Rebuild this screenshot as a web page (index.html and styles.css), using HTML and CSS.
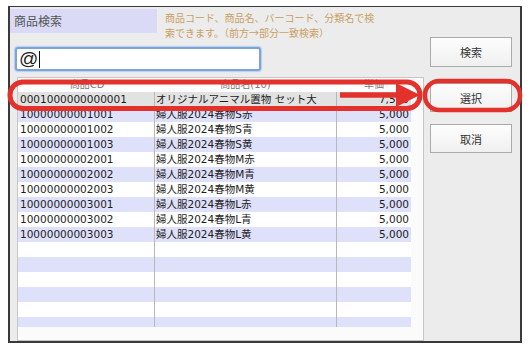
FILE: index.html
```html
<!DOCTYPE html>
<html lang="ja">
<head>
<meta charset="utf-8">
<link rel="stylesheet" href="styles.css">
</head>
<body>
<div class="window">
  <div class="left">
    <div class="top">
      <div class="title">商品検索</div>
      <div class="desc">商品コード、商品名、バーコード、分類名で検<br>索できます。（前方→部分一致検索）</div>
    </div>
    <div class="search"><span class="at">@</span><span class="caret"></span></div>
    <div class="table">
      <div class="grid">
        <div class="row head"><div>商品CD</div><div>商品名(10)</div><div>単価</div></div>
        <div class="body">
          <div class="row sel"><div>0001000000000001</div><div>オリジナルアニマル置物 セット大</div><div class="num">7,500</div></div>
          <div class="row odd"><div>10000000001001</div><div>婦人服2024春物S赤</div><div class="num">5,000</div></div>
          <div class="row"><div>10000000001002</div><div>婦人服2024春物S青</div><div class="num">5,000</div></div>
          <div class="row odd"><div>10000000001003</div><div>婦人服2024春物S黄</div><div class="num">5,000</div></div>
          <div class="row"><div>10000000002001</div><div>婦人服2024春物M赤</div><div class="num">5,000</div></div>
          <div class="row odd"><div>10000000002002</div><div>婦人服2024春物M青</div><div class="num">5,000</div></div>
          <div class="row"><div>10000000002003</div><div>婦人服2024春物M黄</div><div class="num">5,000</div></div>
          <div class="row odd"><div>10000000003001</div><div>婦人服2024春物L赤</div><div class="num">5,000</div></div>
          <div class="row"><div>10000000003002</div><div>婦人服2024春物L青</div><div class="num">5,000</div></div>
          <div class="row odd"><div>10000000003003</div><div>婦人服2024春物L黄</div><div class="num">5,000</div></div>
          <div class="row"><div></div><div></div><div></div></div>
          <div class="row odd"><div></div><div></div><div></div></div>
          <div class="row"><div></div><div></div><div></div></div>
          <div class="row odd"><div></div><div></div><div></div></div>
          <div class="row"><div></div><div></div><div></div></div>
          <div class="row odd"><div></div><div></div><div></div></div>
        </div>
      </div>
    </div>
  </div>
  <div class="right">
    <button class="btn b1">検索</button>
    <button class="btn b2">選択</button>
    <button class="btn b3">取消</button>
  </div>
</div>
<svg class="annot" width="530" height="354" viewBox="0 0 530 354">
  <rect x="10" y="82" width="410" height="26.5" rx="13" ry="13" fill="none" stroke="#e3322b" stroke-width="5"/>
  <line x1="340" y1="95" x2="400" y2="95" stroke="#e3322b" stroke-width="5.5"/>
  <polygon points="396,83 420,95 396,107" fill="#e3322b"/>
  <rect x="425" y="81" width="95" height="29" rx="14" ry="14" fill="none" stroke="#e3322b" stroke-width="4.5"/>
</svg>
</body>
</html>
```
FILE: styles.css
```css
body {
  margin: 0;
  width: 530px;
  height: 354px;
  background: #ffffff;
  position: relative;
  overflow: hidden;
  font-family: "DejaVu Sans", "Noto Sans CJK JP", sans-serif;
}
.window {
  margin: 6px 0 0 8px;
  width: 514px;
  height: 337px;
  box-sizing: border-box;
  border: 2px solid #3a3a3a;
  border-top-width: 1px;
  background: #ececec;
  display: flex;
}
.left {
  width: 414px;
  display: flex;
  flex-direction: column;
}
.top {
  display: flex;
  margin-top: 2px;
}
.title {
  width: 147px;
  height: 24px;
  box-sizing: border-box;
  background: #dadaf6;
  font-family: "Noto Sans CJK JP", sans-serif;
  font-size: 12px;
  color: #555;
  line-height: 24px;
  padding-left: 4px;
}
.desc {
  margin-left: 8px;
  margin-top: 1px;
  font-family: "Noto Sans CJK JP", sans-serif;
  font-size: 10px;
  line-height: 15px;
  color: #c9a062;
}
.search {
  margin: 7px 0 0 5px;
  width: 246px;
  height: 26px;
  box-sizing: border-box;
  border: 2px solid #7aa4dd;
  border-radius: 3px;
  background: #fff;
  box-shadow: 0 0 1px 1px #b9cff0;
  display: flex;
  align-items: center;
  padding-left: 2px;
}
.at {
  font-family: "Liberation Sans", sans-serif;
  font-size: 19px;
  color: #222;
  line-height: 20px;
}
.caret {
  width: 1px;
  height: 17px;
  background: #111;
  margin-left: 1px;
}
.table {
  margin: 6px 0 0 7px;
  width: 407px;
  height: 264px;
  box-sizing: border-box;
  border: 1px solid #c6c6c6;
  background: #fbfbfb;
  padding: 0 12px 13px 0;
}
.grid {
  width: 393px;
  height: 249px;
  background: #fff;
  overflow: hidden;
  font-size: 10.5px;
  color: #1e1e1e;
}
.row {
  display: grid;
  grid-template-columns: 136px 182px 75px;
  height: 15px;
  line-height: 15px;
  white-space: nowrap;
}
.row > div {
  overflow: hidden;
}
.row > div:first-child {
  padding-left: 2px;
}
.row > div + div {
  border-left: 1px solid #b8b8b8;
  padding-left: 1px;
}
.row > .num {
  text-align: right;
  padding-right: 2px;
}
.head {
  height: 14px;
  line-height: 14px;
  color: #7a7a7a;
  font-size: 10px;
}
.head > div {
  text-align: center;
}
.row.head > div + div {
  border-left: none;
}
.body {
  height: 235px;
  overflow: hidden;
}
.odd {
  background: #dfe0fa;
}
.sel {
  background: #e2e2e2;
}
.right {
  margin-left: 6px;
  padding-top: 30px;
  display: flex;
  flex-direction: column;
}
.btn {
  width: 82px;
  box-sizing: border-box;
  border: 1px solid #ababab;
  background: linear-gradient(#fdfdfd, #f0f0f0);
  font-family: "Noto Sans CJK JP", sans-serif;
  font-size: 11px;
  color: #333;
  padding: 0;
}
.b1 { height: 30px; }
.b2 { height: 29px; margin-top: 16px; }
.b3 { height: 29px; margin-top: 12px; }
.annot {
  position: absolute;
  left: 0;
  top: 0;
}
```
